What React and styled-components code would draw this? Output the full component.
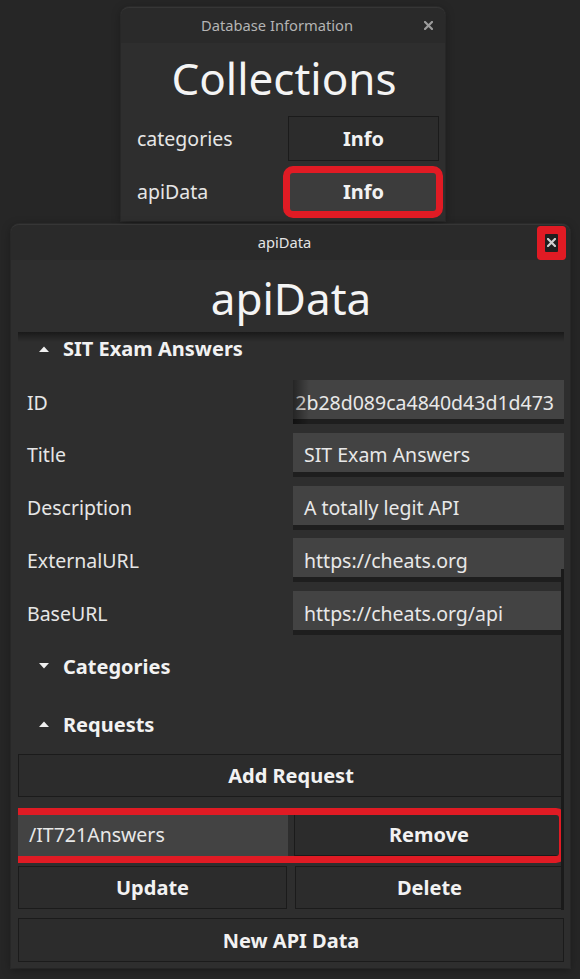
import React from 'react';
import styled, { createGlobalStyle } from 'styled-components';

const Global = createGlobalStyle`
  html, body { margin: 0; padding: 0; background: #262626; }
  body { font-family: "Noto Sans", "Open Sans", sans-serif; color: #ececec; }
  * { box-sizing: border-box; }
`;

const Page = styled.div`
  width: 580px;
  height: 979px;
  display: flex;
  flex-direction: column;
  align-items: flex-start;
  padding-top: 7px;
  overflow: hidden;
`;

const Window = styled.section`
  display: flex;
  flex-direction: column;
  margin-left: ${p => p.$left}px;
  margin-top: ${p => p.$top || 0}px;
  width: ${p => p.$width}px;
  height: ${p => p.$height}px;
  background: #2e2e2e;
  border-radius: 8px 8px 0 0;
  box-shadow: 0 0 0 1px rgba(255, 255, 255, 0.04), 0 2px 10px rgba(0, 0, 0, 0.35);
`;

const TitleBar = styled.header`
  height: 36px;
  flex: none;
  display: grid;
  grid-template-columns: 1fr auto 1fr;
  align-items: center;
  padding-right: 12px;
  background: #2a2a2a;
  border-radius: 8px 8px 0 0;
  border-top: 1px solid #363636;
  font-size: 14.7px;
  color: ${p => (p.$active ? '#e4e4e4' : '#b4b4b4')};
`;

const TitleText = styled.span`
  grid-column: 2;
  line-height: 1;
`;

const CloseBox = styled.div`
  grid-column: 3;
  justify-self: end;
  display: flex;
  align-items: center;
  justify-content: center;
  width: ${p => (p.$highlight ? 13 : 9)}px;
  height: ${p => (p.$highlight ? 18 : 9)}px;
  background: ${p => (p.$highlight ? '#1f1f1f' : 'transparent')};
  border-radius: 1px;
  box-shadow: ${p => (p.$highlight ? '0 0 0 8px #e01b24' : 'none')};
  color: ${p => (p.$highlight ? '#d0d0d0' : '#9c9c9c')};
`;

const Body = styled.div`
  flex: 1;
  min-height: 0;
  display: flex;
  flex-direction: column;
  padding: ${p => p.$pad};
`;

const BigTitle = styled.h1`
  margin: 0;
  height: 60px;
  flex: none;
  font-size: 44px;
  line-height: 60px;
  font-weight: 400;
  text-align: center;
  color: #f4f4f4;
`;

const CollectionGrid = styled.div`
  margin-top: 8px;
  display: grid;
  grid-template-columns: 155px 151px;
  column-gap: 4px;
  row-gap: 8px;
  grid-auto-rows: 45px;
`;

const Label = styled.div`
  display: flex;
  align-items: center;
  padding-left: ${p => p.$indent || 8}px;
  font-size: 19.5px;
  color: #e6e6e6;
  white-space: nowrap;
`;

const Button = styled.div`
  height: ${p => p.$h || 43}px;
  display: flex;
  align-items: center;
  justify-content: center;
  background: ${p => (p.$hover ? '#3c3c3c' : '#2c2c2c')};
  border: 1px solid #1b1b1b;
  font-size: 20px;
  font-weight: 700;
  color: #f2f2f2;
  margin-top: ${p => p.$mt || 0}px;
`;

const Highlight = styled.div`
  position: relative;
  margin-top: ${p => p.$mt || 0}px;
  &::after {
    content: '';
    position: absolute;
    inset: ${p => p.$inset};
    border: 7px solid #e01b24;
    border-radius: 10px;
    pointer-events: none;
  }
`;

const ScrollArea = styled.div`
  position: relative;
  flex: 1;
  min-height: 0;
  margin-top: 4px;
  overflow: hidden;
  &::before {
    content: '';
    position: absolute;
    left: 0;
    right: 0;
    top: 0;
    height: 10px;
    background: linear-gradient(rgba(0, 0, 0, 0.45), rgba(0, 0, 0, 0));
    z-index: 2;
  }
`;

const ScrollBar = styled.div`
  position: absolute;
  right: 0;
  top: 237px;
  bottom: 2px;
  width: 3px;
  background: #1a1a1a;
  z-index: 3;
`;

const ScrollContent = styled.div`
  margin-top: -6px;
  display: flex;
  flex-direction: column;
`;

const AccordionHeader = styled.div`
  height: 45px;
  flex: none;
  display: flex;
  align-items: center;
  gap: 14px;
  padding-left: 21px;
  margin-top: ${p => p.$mt || 0}px;
  font-size: 20px;
  font-weight: 700;
  color: #f2f2f2;
`;

const Form = styled.div`
  margin-top: 9px;
  display: grid;
  grid-template-columns: 1fr 1fr;
  column-gap: 4px;
  row-gap: 8.75px;
  grid-auto-rows: 44px;
`;

const Entry = styled.div`
  position: relative;
  height: ${p => (p.$plain ? 43 : 44)}px;
  display: flex;
  align-items: center;
  justify-content: ${p => (p.$scrolled ? 'flex-end' : 'flex-start')};
  overflow: hidden;
  padding: ${p => (p.$scrolled ? '0 10px 0 0' : '0 0 0 11px')};
  background: #434343;
  box-shadow: ${p => (p.$plain ? 'none' : 'inset 0 -5px 0 #1e1e1e')};
  font-size: 19.5px;
  color: #e8e8e8;
  white-space: nowrap;
  &::before {
    content: '';
    display: ${p => (p.$scrolled ? 'block' : 'none')};
    position: absolute;
    left: 0;
    top: 0;
    bottom: 0;
    width: 16px;
    background: linear-gradient(90deg, rgba(0, 0, 0, 0.45), rgba(0, 0, 0, 0));
  }
`;

const TwoCols = styled.div`
  display: grid;
  grid-template-columns: 1fr 1fr;
  column-gap: ${p => p.$gap}px;
  margin-top: ${p => p.$mt || 0}px;
`;

const Footer = styled.div`
  margin-top: 6px;
  flex: none;
`;

const CloseIcon = () => (
  <svg width="9" height="9" viewBox="0 0 9 9">
    <path d="M1 1L8 8M8 1L1 8" stroke="currentColor" strokeWidth="2.2" strokeLinecap="square" />
  </svg>
);

const Caret = ({ up }) => (
  <svg width="10" height="6" viewBox="0 0 10 6">
    <polygon points={up ? '0,6 5,0.5 10,6' : '0,0 5,5.5 10,0'} fill="#f0f0f0" />
  </svg>
);

const fields = [
  ['Title', 'SIT Exam Answers'],
  ['Description', 'A totally legit API'],
  ['ExternalURL', 'https://cheats.org'],
  ['BaseURL', 'https://cheats.org/api'],
];

export default function App() {
  return (
    <>
      <Global />
      <Page>
        <Window $left={121} $width={324} $height={214}>
          <TitleBar>
            <TitleText>Database Information</TitleText>
            <CloseBox>
              <CloseIcon />
            </CloseBox>
          </TitleBar>
          <Body $pad="5px 6px 7px 8px">
            <BigTitle>Collections</BigTitle>
            <CollectionGrid>
              <Label>categories</Label>
              <Button $h={45}>Info</Button>
              <Label>apiData</Label>
              <Highlight $inset="-3px -4px -4px -5px">
                <Button $h={45} $hover>Info</Button>
              </Highlight>
            </CollectionGrid>
          </Body>
        </Window>

        <Window $left={11} $top={3} $width={559} $height={744}>
          <TitleBar $active>
            <TitleText>apiData</TitleText>
            <CloseBox $highlight>
              <CloseIcon />
            </CloseBox>
          </TitleBar>
          <Body $pad="8px 6px 6px 7px">
            <BigTitle>apiData</BigTitle>
            <ScrollArea>
              <ScrollBar />
              <ScrollContent>
                <AccordionHeader>
                  <Caret up />
                  SIT Exam Answers
                </AccordionHeader>
                <Form>
                  <Label $indent={9}>ID</Label>
                  <Entry $scrolled>2b28d089ca4840d43d1d473</Entry>
                  {fields.map(([k, v]) => (
                    <React.Fragment key={k}>
                      <Label $indent={9}>{k}</Label>
                      <Entry>{v}</Entry>
                    </React.Fragment>
                  ))}
                </Form>
                <AccordionHeader $mt={8.5}>
                  <Caret />
                  Categories
                </AccordionHeader>
                <AccordionHeader $mt={13}>
                  <Caret up />
                  Requests
                </AccordionHeader>
                <Button $mt={7.5}>Add Request</Button>
                <Highlight $mt={16} $inset="-5px -2px -7px -9px">
                  <TwoCols $gap={6}>
                    <Entry $plain>/IT721Answers</Entry>
                    <Button>Remove</Button>
                  </TwoCols>
                </Highlight>
                <TwoCols $gap={8} $mt={10}>
                  <Button>Update</Button>
                  <Button>Delete</Button>
                </TwoCols>
              </ScrollContent>
            </ScrollArea>
            <Footer>
              <Button $h={44}>New API Data</Button>
            </Footer>
          </Body>
        </Window>
      </Page>
    </>
  );
}
